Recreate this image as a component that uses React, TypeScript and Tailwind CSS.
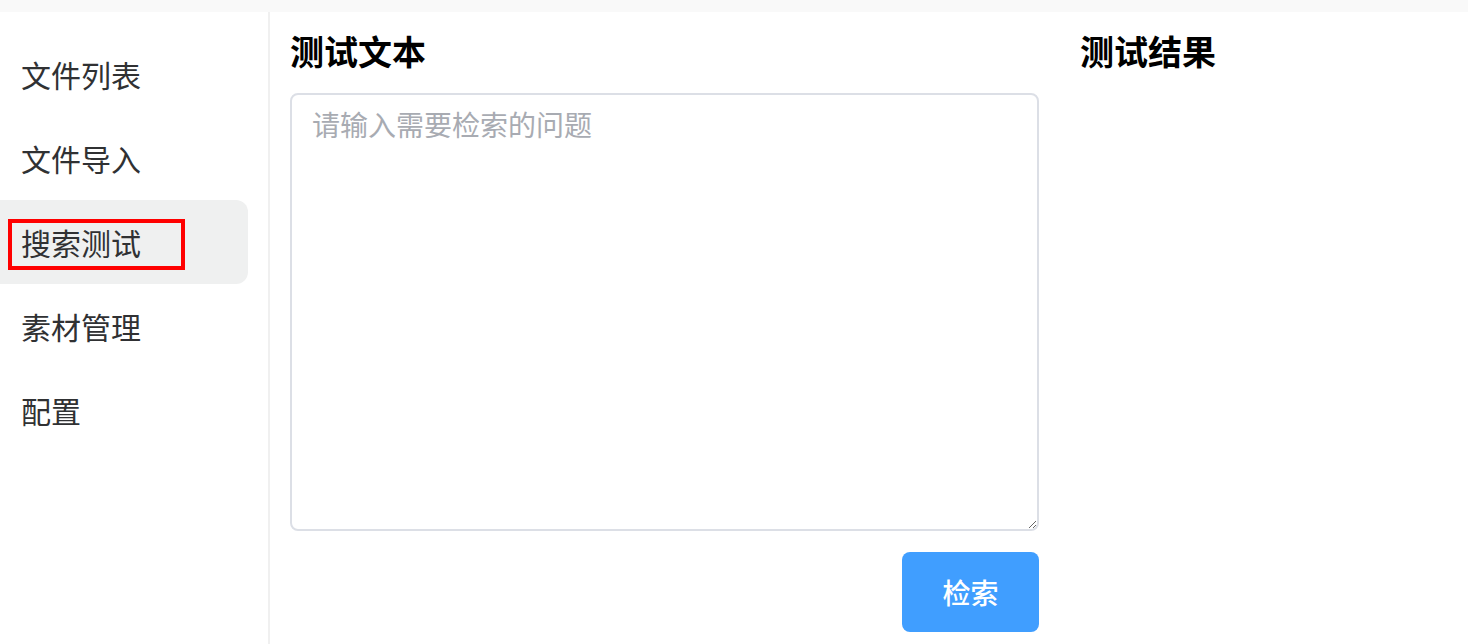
import React from "react";

const items = ["文件列表", "文件导入", "搜索测试", "素材管理", "配置"];

export default function App() {
  return (
    <div
      className="w-[1468px] h-[644px] bg-white overflow-hidden flex flex-col"
      style={{ fontFamily: '"Noto Sans CJK SC", "Noto Sans", sans-serif' }}
    >
      <div className="h-[12px] bg-[#f9f9f9] shrink-0" />
      <div className="flex flex-1 min-h-0">
        <aside className="w-[270px] shrink-0 border-r-2 border-[#f0f0f0] pt-[20px] pr-[20px]">
          {items.map((t, i) => (
            <div
              key={t}
              className={`relative h-[84px] flex items-center pl-[21px] text-[30px] text-[#303133] ${
                i === 2 ? "bg-[#eff0f0] rounded-r-[12px]" : ""
              }`}
            >
              {t}
              {i === 2 && (
                <div className="absolute left-[8px] top-[19px] w-[177px] h-[51px] border-[4px] border-[#ff0000]" />
              )}
            </div>
          ))}
        </aside>
        <main className="flex-1 flex pl-[20px] pt-[19px] gap-[41px]">
          <section className="w-[749px] flex flex-col">
            <h2 className="h-[40px] leading-[40px] text-[34px] font-bold text-black">测试文本</h2>
            <textarea
              className="mt-[22px] w-[749px] h-[438px] border-2 border-[#dcdfe6] rounded-[8px] px-[20px] py-[8px] text-[28px] leading-[1.5] text-[#303133] placeholder:text-[#a8abb2] outline-none"
              placeholder="请输入需要检索的问题"
            />
            <div className="flex justify-end mt-[21px]">
              <button className="w-[137px] h-[80px] bg-[#409eff] rounded-[8px] text-white text-[28px] font-medium">
                检索
              </button>
            </div>
          </section>
          <section className="flex-1">
            <h2 className="h-[40px] leading-[40px] text-[34px] font-bold text-black">测试结果</h2>
          </section>
        </main>
      </div>
    </div>
  );
}
